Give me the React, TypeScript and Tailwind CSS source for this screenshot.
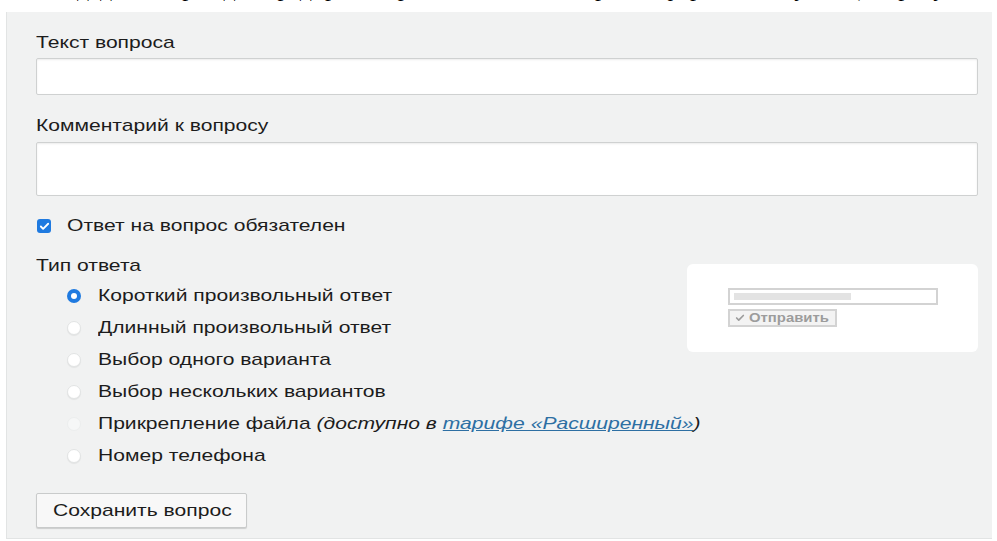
import type { ReactNode } from "react";
import { Check } from "lucide-react";

const options = [
  { label: "Короткий произвольный ответ", checked: true },
  { label: "Длинный произвольный ответ" },
  { label: "Выбор одного варианта" },
  { label: "Выбор нескольких вариантов" },
  { label: "Прикрепление файла", locked: true },
  { label: "Номер телефона" },
];

// wide Helvetica-style caption used throughout the form
function T({ children }: { children: ReactNode }) {
  return <span className="inline-block origin-left scale-x-[1.24] whitespace-nowrap">{children}</span>;
}

function Radio({ checked, dim }: { checked?: boolean; dim?: boolean }) {
  if (checked) {
    return (
      <span className="flex h-[14px] w-[14px] shrink-0 items-center justify-center rounded-full bg-[#1f7ae0]">
        <span className="h-[6px] w-[6px] rounded-full bg-white" />
      </span>
    );
  }
  return (
    <span
      className={
        dim
          ? "h-[14px] w-[14px] shrink-0 rounded-full border border-[#eceeee] bg-[#f6f7f7]"
          : "h-[14px] w-[14px] shrink-0 rounded-full border border-[#e2e4e4] bg-white shadow-[0_1px_1px_rgba(0,0,0,0.06)]"
      }
    />
  );
}

export default function App() {
  return (
    <div className="h-[541px] w-[997px] overflow-hidden bg-white font-['Liberation_Sans',Arial,sans-serif] text-[17px] leading-[18px] text-[#1c1c1c]">
      {/* tail of the document line above the form */}
      <div className="h-[12px] overflow-hidden pl-[40px]">
        <p className="-mt-[26px] whitespace-nowrap font-['Liberation_Serif','Times_New_Roman',serif] text-[24px] leading-[28px] text-black">
          Создадим вопрос для предпросмотра в этом окне настройки формы и получим (см. рисунок ниже)
        </p>
      </div>

      <div className="ml-[6px] mr-[5px] h-[527px] border-b border-l border-[#e2e4e4] bg-[#f1f2f2] pl-[29px] pr-[14px] pt-[22px]">
        <label className="block"><T>Текст вопроса</T></label>
        <div className="mt-[6px] h-[37px] rounded-[2px] border border-[#cfd1d1] bg-white shadow-[inset_0_1px_2px_rgba(0,0,0,0.08)]" />

        <label className="mt-[22px] block"><T>Комментарий к вопросу</T></label>
        <div className="mt-[7px] h-[54px] rounded-[2px] border border-[#cfd1d1] bg-white shadow-[inset_0_1px_2px_rgba(0,0,0,0.08)]" />

        <div className="mt-[21px] flex items-center gap-[16px] pl-[1px]">
          <span className="flex h-[14px] w-[14px] items-center justify-center rounded-[3px] bg-[#1f7ae0]">
            <Check className="h-[11px] w-[11px] text-white" strokeWidth={4} />
          </span>
          <T>Ответ на вопрос обязателен</T>
        </div>

        <div className="mt-[13px] flex gap-[26px]">
          <div className="flex-1">
            <div className="mt-[9px]"><T>Тип ответа</T></div>
            <ul className="mt-[12px] flex flex-col gap-[14px] pl-[31px]">
              {options.map((o) => (
                <li key={o.label} className="flex items-center gap-[17px]">
                  <Radio checked={o.checked} dim={o.locked} />
                  <T>
                    {o.label}
                    {o.locked && (
                      <>
                        {" "}
                        <i>
                          (доступно в{" "}
                          <a className="text-[#2d6fa3] underline decoration-[#2d6fa3]">тарифе «Расширенный»</a>)
                        </i>
                      </>
                    )}
                  </T>
                </li>
              ))}
            </ul>
          </div>

          {/* preview of the short answer field */}
          <div className="mt-[16px] h-[88px] w-[291px] rounded-[6px] bg-white pl-[41px] pt-[24px]">
            <div className="flex h-[17px] w-[210px] items-center border-2 border-[#d3d3d3] px-[4px]">
              <span className="h-[7px] w-[117px] bg-[#e3e3e3]" />
            </div>
            <div className="mt-[4px] flex h-[18px] w-[109px] items-center gap-[4px] border-2 border-[#d3d3d3] bg-[#f3f3f3] pl-[5px] text-[12px] font-bold leading-[14px] text-[#9c9c9c]">
              <Check className="h-[10px] w-[10px] shrink-0" strokeWidth={4} />
              <T>Отправить</T>
            </div>
          </div>
        </div>

        <button className="mt-[28px] h-[35px] w-[211px] rounded-[2px] border border-[#c9cbcb] bg-[#f8f8f8] pl-[16px] text-left shadow-[0_1px_1px_rgba(0,0,0,0.15)]">
          <T>Сохранить вопрос</T>
        </button>
      </div>
    </div>
  );
}
